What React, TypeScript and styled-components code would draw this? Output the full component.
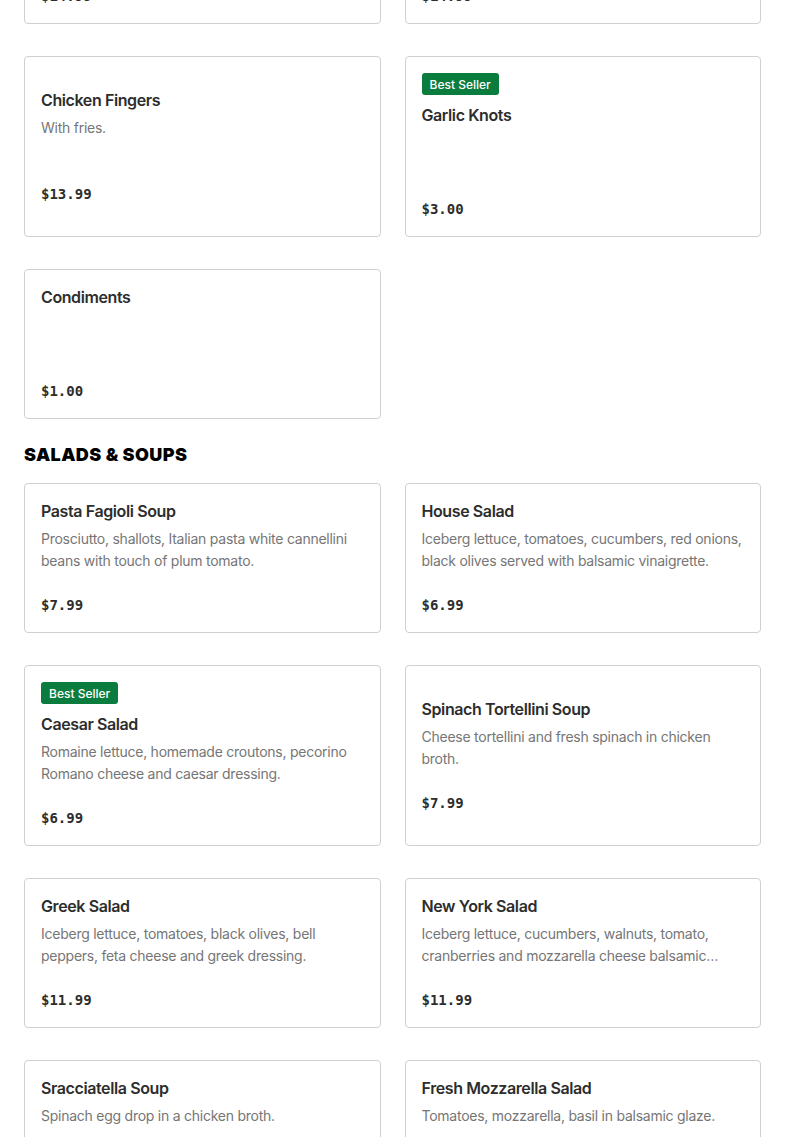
import React from "react";
import styled, { createGlobalStyle } from "styled-components";

const GlobalStyle = createGlobalStyle`
  html, body { margin: 0; padding: 0; background: #ffffff; }
  body { font-family: Inter, "Liberation Sans", sans-serif; color: #2d2d2d; }
  * { box-sizing: border-box; }
`;

const Page = styled.main`
  padding: 0 24px;
  margin-top: -126px;
`;

const Section = styled.section`
  & + & { margin-top: 24px; }
`;

const SectionTitle = styled.h2`
  margin: 0 0 16px;
  font-family: Inter, "Liberation Sans", sans-serif;
  font-weight: 900;
  font-size: 18px;
  line-height: 24px;
  letter-spacing: 0.4px;
  text-transform: uppercase;
  color: #000;
`;

const Grid = styled.div`
  display: grid;
  grid-template-columns: 1fr 1fr;
  column-gap: 24px;
  row-gap: 32px;
`;

const Card = styled.article`
  border: 1px solid #d0d0d0;
  border-radius: 4px;
  padding: 16px;
  display: flex;
  flex-direction: column;
  justify-content: center;
  background: #fff;
`;

const Badge = styled.span`
  align-self: flex-start;
  flex-shrink: 0;
  height: 22px;
  padding: 0 8px;
  display: inline-flex;
  align-items: center;
  background: #0a7c3e;
  color: #fff;
  border-radius: 3px;
  font-size: 12px;
  font-weight: 500;
  margin-bottom: 9px;
`;

const Title = styled.h3`
  margin: 0;
  font-size: 16px;
  line-height: 22px;
  font-weight: 600;
  color: #2d2d2d;
  letter-spacing: -0.4px;
`;

const Desc = styled.p`
  margin: 6px 0 22px;
  height: 44px;
  flex-shrink: 0;
  font-size: 14px;
  line-height: 22px;
  letter-spacing: -0.25px;
  color: #767676;
  display: -webkit-box;
  -webkit-line-clamp: 2;
  -webkit-box-orient: vertical;
  overflow: hidden;
`;

const Price = styled.div`
  font-family: "DejaVu Sans Mono", "Liberation Mono", monospace;
  font-weight: 700;
  font-size: 14px;
  line-height: 22px;
  color: #2d2d2d;
`;

type Item = { name: string; desc?: string; price: string; best?: boolean };

const appetizers: Item[] = [
  { name: "Mozzarella Sticks", desc: "With marinara sauce.", price: "$14.99" },
  { name: "Chicken Wings", desc: "Buffalo or BBQ.", price: "$14.99" },
  { name: "Chicken Fingers", desc: "With fries.", price: "$13.99" },
  { name: "Garlic Knots", price: "$3.00", best: true },
  { name: "Condiments", price: "$1.00" },
];

const salads: Item[] = [
  { name: "Pasta Fagioli Soup", desc: "Prosciutto, shallots, Italian pasta white cannellini beans with touch of plum tomato.", price: "$7.99" },
  { name: "House Salad", desc: "Iceberg lettuce, tomatoes, cucumbers, red onions, black olives served with balsamic vinaigrette.", price: "$6.99" },
  { name: "Caesar Salad", desc: "Romaine lettuce, homemade croutons, pecorino Romano cheese and caesar dressing.", price: "$6.99", best: true },
  { name: "Spinach Tortellini Soup", desc: "Cheese tortellini and fresh spinach in chicken broth.", price: "$7.99" },
  { name: "Greek Salad", desc: "Iceberg lettuce, tomatoes, black olives, bell peppers, feta cheese and greek dressing.", price: "$11.99" },
  { name: "New York Salad", desc: "Iceberg lettuce, cucumbers, walnuts, tomato, cranberries and mozzarella cheese balsamic vinaigrette.", price: "$11.99" },
  { name: "Sracciatella Soup", desc: "Spinach egg drop in a chicken broth.", price: "$7.99" },
  { name: "Fresh Mozzarella Salad", desc: "Tomatoes, mozzarella, basil in balsamic glaze.", price: "$9.99" },
];

const MenuCard = ({ item }: { item: Item }) => (
  <Card>
    {item.best && <Badge>Best Seller</Badge>}
    <Title>{item.name}</Title>
    <Desc>{item.desc ?? ""}</Desc>
    <Price>{item.price}</Price>
  </Card>
);

export default function App() {
  return (
    <>
      <GlobalStyle />
      <Page>
        <Section>
          <Grid>
            {appetizers.map((it) => (
              <MenuCard key={it.name} item={it} />
            ))}
          </Grid>
        </Section>
        <Section>
          <SectionTitle>Salads &amp; Soups</SectionTitle>
          <Grid>
            {salads.map((it) => (
              <MenuCard key={it.name} item={it} />
            ))}
          </Grid>
        </Section>
      </Page>
    </>
  );
}
